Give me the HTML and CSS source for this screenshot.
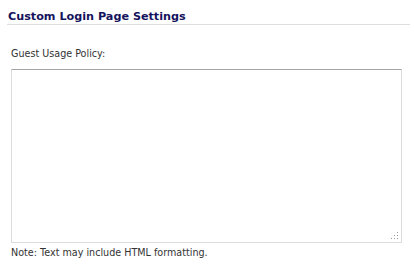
FILE: index.html
```html
<!DOCTYPE html>
<html lang="en">
<head>
  <meta charset="UTF-8" />
  <title>Custom Login Page Settings</title>
  <link rel="stylesheet" href="styles.css">
</head>
<body>
  <div class="settings">
    <h2 class="section-title">Custom Login Page Settings</h2>
    <div class="field">
      <label class="field-label" for="policy">Guest Usage Policy:</label>
      <div class="textarea-wrap">
        <textarea id="policy" class="policy-box"></textarea>
        <svg class="grip" width="9" height="9" viewBox="0 0 9 9">
          <rect x="7" y="1" width="1" height="1"/>
          <rect x="4" y="4" width="1" height="1"/>
          <rect x="7" y="4" width="1" height="1"/>
          <rect x="1" y="7" width="1" height="1"/>
          <rect x="4" y="7" width="1" height="1"/>
          <rect x="7" y="7" width="1" height="1"/>
        </svg>
      </div>
      <div class="note">Note: Text may include HTML formatting.</div>
    </div>
  </div>
</body>
</html>
```

FILE: styles.css
```css
* {
  margin: 0;
  padding: 0;
  box-sizing: border-box;
}

body {
  font-family: "DejaVu Sans", Verdana, sans-serif;
  font-size: 9.6px;
  color: #333;
  background: #fff;
}

.settings {
  padding-top: 10px;
}

.section-title {
  font-size: 11.2px;
  line-height: 13px;
  font-weight: bold;
  color: #14145c;
  margin: 0 4px 0 7px;
  padding: 0 0 1px 1px;
  border-bottom: 1px solid #dedede;
}

.field {
  padding: 23px 12px 0 11px;
}

.field-label {
  display: block;
  line-height: 12px;
  margin-bottom: 9px;
}

.textarea-wrap {
  position: relative;
  width: 391px;
  height: 174px;
}

.policy-box {
  display: block;
  width: 100%;
  height: 100%;
  resize: none;
  border: 1px solid #dcdcdc;
  border-top-color: #a5a5a5;
  outline: none;
  font-family: inherit;
  font-size: 10px;
}

.grip {
  position: absolute;
  right: 3px;
  bottom: 3px;
  fill: #999;
}

.note {
  margin-top: 4px;
  line-height: 12px;
}
```
